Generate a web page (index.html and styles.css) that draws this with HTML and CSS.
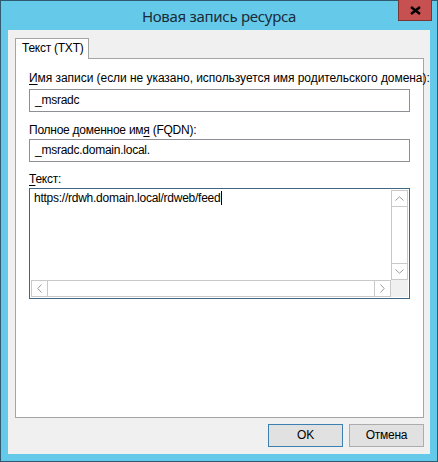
FILE: index.html
```html
<!DOCTYPE html>
<html lang="ru">
<head>
<meta charset="utf-8">
<title>Новая запись ресурса</title>
<link rel="stylesheet" href="styles.css">
</head>
<body>
<div class="window">
  <div class="titlebar">
    <span class="title">Новая запись ресурса</span>
    <div class="close"><svg width="11" height="9" viewBox="0 0 11 9"><path d="M1 1 L10 8 M10 1 L1 8" stroke="#000" stroke-width="2.4" fill="none"/></svg></div>
  </div>
  <div class="client">
    <div class="tabs"><div class="tab">Текст (TXT)</div></div>
    <div class="panel">
      <div class="label l1"><u>И</u>мя записи (если не указано, используется имя родительского домена):</div>
      <div class="input i1">_msradc</div>
      <div class="label l2">Полное доменное им<u>я</u> (FQDN):</div>
      <div class="input i2">_msradc.domain.local.</div>
      <div class="label l3"><u>Т</u>екст:</div>
      <div class="textarea">
        <div class="ta-text">https://rdwh.domain.local/rdweb/feed<span class="caret"></span></div>
        <div class="vscroll">
          <div class="sbtn"><svg width="9" height="5" viewBox="0 0 9 5"><path d="M0.5 4.5 L4.5 0.8 L8.5 4.5" stroke="#9b9b9b" fill="none"/></svg></div>
          <div class="track"></div>
          <div class="sbtn"><svg width="9" height="5" viewBox="0 0 9 5"><path d="M0.5 0.5 L4.5 4.2 L8.5 0.5" stroke="#9b9b9b" fill="none"/></svg></div>
        </div>
        <div class="hscroll">
          <div class="sbtn"><svg width="5" height="9" viewBox="0 0 5 9"><path d="M4.5 0.5 L0.8 4.5 L4.5 8.5" stroke="#9b9b9b" fill="none"/></svg></div>
          <div class="track"></div>
          <div class="sbtn"><svg width="5" height="9" viewBox="0 0 5 9"><path d="M0.5 0.5 L4.2 4.5 L0.5 8.5" stroke="#9b9b9b" fill="none"/></svg></div>
        </div>
        <div class="corner"></div>
      </div>
    </div>
    <div class="buttons">
      <div class="btn default">OK</div>
      <div class="btn">Отмена</div>
    </div>
  </div>
</div>
</body>
</html>
```
FILE: styles.css
```css
* { box-sizing: border-box; }
html, body { margin: 0; padding: 0; background: #ffffff; }
body { font-family: "Liberation Sans", Arial, sans-serif; font-size: 12px; letter-spacing: -0.25px; color: #000; }

.window {
  position: relative;
  width: 438px;
  height: 462px;
  background: #65caea;
  border: 1px solid #2f5a70;
  display: flex;
  flex-direction: column;
}

.titlebar {
  height: 29px;
  flex: none;
  display: flex;
  align-items: center;
  justify-content: center;
  padding-top: 1px;
}
.title {
  font-family: "Noto Sans", "Liberation Sans", sans-serif;
  font-size: 15px;
  letter-spacing: -0.3px;
  color: #1b2b38;
  line-height: 20px;
}
.close {
  position: absolute;
  top: -1px;
  right: 5px;
  width: 34px;
  height: 21px;
  background: #c75050;
  border: 1px solid #7a3535;
  border-top: none;
  display: flex;
  align-items: center;
  justify-content: center;
}

.client {
  flex: 1;
  margin: 0 7px 7px 7px;
  background: #f0f0f0;
  padding: 8px 6px 6px 7px;
  display: flex;
  flex-direction: column;
}

.tabs { display: flex; height: 20px; position: relative; z-index: 1; }
.tab {
  width: 74px;
  height: 21px;
  background: #ffffff;
  border: 1px solid #a5a5a5;
  border-bottom: none;
  padding-left: 6px;
  line-height: 19px;
  color: #000;
}

.panel {
  height: 360px;
  background: #ffffff;
  border: 1px solid #a5a5a5;
  padding: 12px 13px 0 13px;
  display: flex;
  flex-direction: column;
}

.label { line-height: 15px; height: 15px; white-space: nowrap; }
.l1 { letter-spacing: -0.05px; }
.l2 { margin-top: 11px; }
.l3 { margin-top: 10px; }
.label u { text-decoration-thickness: 1px; text-underline-offset: 2px; }

.input {
  height: 23px;
  border: 1px solid #8c8f94;
  padding: 0 5px;
  line-height: 21px;
  background: #fff;
}
.i1 { margin-top: 3px; }
.i2 { margin-top: 1px; }

.textarea {
  margin-top: 1px;
  height: 111px;
  border: 1px solid #3f6683;
  padding: 1px;
  display: grid;
  grid-template-columns: 1fr 17px;
  grid-template-rows: 1fr 17px;
  background: #fff;
}
.ta-text {
  padding: 1px 0 0 3px;
  line-height: 15px;
  white-space: nowrap;
}
.caret {
  display: inline-block;
  width: 1px;
  height: 14px;
  margin-left: 1px;
  background: #000;
  vertical-align: -3px;
}

.vscroll {
  display: flex;
  flex-direction: column;
  border: 1px solid #c9c9c9;
  background: #fff;
}
.vscroll .track { flex: 1; }
.hscroll {
  display: flex;
  border: 1px solid #c9c9c9;
  background: #fff;
}
.hscroll .track { flex: 1; }
.sbtn {
  width: 15px;
  height: 15px;
  display: flex;
  align-items: center;
  justify-content: center;
  background: #fff;
}
.vscroll .sbtn:first-child { border-bottom: 1px solid #c9c9c9; height: 16px; }
.vscroll .sbtn:last-child { border-top: 1px solid #c9c9c9; height: 16px; }
.hscroll .sbtn:first-child { border-right: 1px solid #c9c9c9; width: 16px; }
.hscroll .sbtn:last-child { border-left: 1px solid #c9c9c9; width: 16px; }
.corner { background: #f0f0f0; }

.buttons {
  display: flex;
  justify-content: flex-end;
  gap: 6px;
  margin-top: 6px;
}
.btn {
  width: 75px;
  height: 23px;
  border: 1px solid #acacac;
  background: #e1e1e1;
  text-align: center;
  line-height: 21px;
  color: #000;
}
.btn.default { border-color: #3c7fb1; }
```
